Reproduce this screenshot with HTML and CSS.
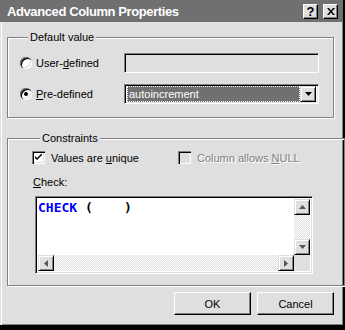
FILE: index.html
```html
<!DOCTYPE html>
<html lang="en">

<head>
    <meta charset="UTF-8">
    <title>Advanced Column Properties</title>
    <link rel="stylesheet" href="styles.css">
</head>

<body>
    <div class="window">
        <div class="titlebar">
            <span class="title">Advanced Column Properties</span>
            <div class="title-btns">
                <span class="tbtn">?</span>
                <span class="tbtn tbtn-close">
                    <svg width="8" height="7" viewBox="0 0 8 7"><path d="M0 0h2l2 2.5 2-2.5h2l-3 3.5 3 3.5h-2l-2-2.5-2 2.5h-2l3-3.5z" fill="#000"/></svg>
                </span>
            </div>
        </div>

        <div class="content">
            <fieldset class="group group-default">
                <legend>Default value</legend>
                <div class="row">
                    <label class="opt">
                        <span class="radio"></span>
                        <span>User-<u>d</u>efined</span>
                    </label>
                    <div class="field field-disabled"></div>
                </div>
                <div class="row row-second">
                    <label class="opt">
                        <span class="radio radio-on"></span>
                        <span><u>P</u>re-defined</span>
                    </label>
                    <div class="field combo">
                        <div class="combo-value">autoincrement</div>
                        <span class="btn-small">
                            <svg width="7" height="4" viewBox="0 0 7 4"><path d="M0 0h7l-3.5 4z" fill="#000"/></svg>
                        </span>
                    </div>
                </div>
            </fieldset>

            <fieldset class="group group-constraints">
                <legend>Constraints</legend>
                <div class="checks">
                    <label class="chk">
                        <span class="checkbox">
                            <svg width="7" height="7" viewBox="0 0 7 7"><path d="M0 2l2 2 5-5v2l-5 5-2-2z" fill="#000"/></svg>
                        </span>
                        <span>Values are <u>u</u>nique</span>
                    </label>
                    <label class="chk chk-disabled">
                        <span class="checkbox checkbox-off"></span>
                        <span class="muted">Column allows <u>N</u>ULL</span>
                    </label>
                </div>
                <div class="check-label"><u>C</u>heck:</div>
                <div class="editor">
                    <div class="code"><span class="kw">CHECK</span> (    )</div>
                    <div class="vscroll">
                        <span class="btn-small">
                            <svg width="7" height="4" viewBox="0 0 7 4"><path d="M3.5 0l3.5 4h-7z" fill="#555"/></svg>
                        </span>
                        <span class="track"></span>
                        <span class="btn-small">
                            <svg width="7" height="4" viewBox="0 0 7 4"><path d="M0 0h7l-3.5 4z" fill="#555"/></svg>
                        </span>
                    </div>
                    <div class="hscroll">
                        <span class="btn-small">
                            <svg width="4" height="7" viewBox="0 0 4 7"><path d="M0 3.5l4-3.5v7z" fill="#555"/></svg>
                        </span>
                        <span class="track"></span>
                        <span class="btn-small">
                            <svg width="4" height="7" viewBox="0 0 4 7"><path d="M4 3.5l-4-3.5v7z" fill="#555"/></svg>
                        </span>
                    </div>
                    <div class="corner"></div>
                </div>
            </fieldset>

            <div class="actions">
                <span class="btn">OK</span>
                <span class="btn">Cancel</span>
            </div>
        </div>
    </div>
</body>

</html>
```

FILE: styles.css
```css
* {
    margin: 0;
    padding: 0;
    box-sizing: border-box;
}

body {
    background: #000;
    font-family: 'Liberation Sans', Arial, sans-serif;
    font-size: 11px;
    color: #000;
}

.window {
    width: 344px;
    height: 326px;
    background: #dfdfdf;
    border-right: 1px solid #000;
    border-bottom: 1px solid #000;
    box-shadow: inset 1px 1px 0 #dfdfdf, inset 2px 2px 0 #fff, inset -1px -1px 0 #808080;
}

.titlebar {
    height: 22px;
    background: #707070;
    display: flex;
    align-items: center;
    justify-content: space-between;
    padding: 0 5px 0 7px;
}
.title {
    color: #fff;
    font-weight: bold;
    font-size: 13px;
    letter-spacing: -0.4px;
}
.title-btns {
    display: flex;
    gap: 5px;
}
.tbtn {
    width: 15px;
    height: 15px;
    display: flex;
    align-items: center;
    justify-content: center;
    background: #dfdfdf;
    font-weight: bold;
    font-size: 13px;
    border: 1px solid;
    border-color: #fff #000 #000 #fff;
    box-shadow: inset -1px -1px 0 #808080;
}

.content {
    padding: 0 0 0 7px;
}

.group {
    width: 327px;
    border: 1px solid #808080;
    box-shadow: 1px 1px 0 #fff, inset 1px 1px 0 #fff;
}
.group legend {
    margin-left: 8px;
    padding: 0 2px;
    line-height: 13px;
    background: #dfdfdf;
}
.group-default {
    margin-top: 9px;
    padding: 9px 12px 13px 12px;
}
.group-constraints {
    margin-top: 14px;
    padding: 6px 20px 11px 24px;
}

.row {
    display: flex;
    align-items: center;
    height: 20px;
}
.row-second {
    margin-top: 11px;
}
.opt {
    width: 104px;
    display: flex;
    align-items: center;
    gap: 4px;
}
.radio {
    width: 12px;
    height: 12px;
    border-radius: 50%;
    background: #fff;
    display: flex;
    align-items: center;
    justify-content: center;
    box-shadow: inset 1px 1px 0 #808080, inset 2px 2px 0 #000, inset -1px -1px 0 #fff, inset -2px -2px 0 #dfdfdf;
}
.radio-on::after {
    content: "";
    width: 4px;
    height: 4px;
    border-radius: 50%;
    background: #000;
}

.field {
    width: 195px;
    height: 20px;
    border: 1px solid;
    border-color: #808080 #fff #fff #808080;
    box-shadow: inset 1px 1px 0 #000, inset -1px -1px 0 #dfdfdf;
}
.field-disabled {
    background: #dfdfdf;
}
.combo {
    background: #fff;
    display: flex;
    align-items: center;
    padding: 2px;
}
.combo-value {
    flex: 1;
    height: 16px;
    background: #707070;
    color: #fff;
    line-height: 14px;
    padding-left: 1px;
    border: 1px dotted #fff;
}

.btn-small {
    width: 16px;
    height: 16px;
    display: flex;
    align-items: center;
    justify-content: center;
    background: #dfdfdf;
    border: 1px solid;
    border-color: #dfdfdf #000 #000 #dfdfdf;
    box-shadow: inset 1px 1px 0 #fff, inset -1px -1px 0 #808080;
}

.checks {
    display: flex;
    align-items: center;
    height: 13px;
}
.chk {
    display: flex;
    align-items: center;
    gap: 6px;
    width: 146px;
}
.checkbox {
    width: 13px;
    height: 13px;
    background: #fff;
    display: flex;
    align-items: center;
    justify-content: center;
    box-shadow: inset 1px 1px 0 #808080, inset 2px 2px 0 #000, inset -1px -1px 0 #fff, inset -2px -2px 0 #dfdfdf;
}
.checkbox-off {
    background: #dfdfdf;
}
.muted {
    color: #808080;
    text-shadow: 1px 1px 0 #fff;
}

.check-label {
    margin-top: 12px;
    margin-left: 1px;
    line-height: 13px;
}

.editor {
    margin-top: 7px;
    margin-left: 3px;
    width: 278px;
    height: 78px;
    background: #fff;
    border: 1px solid;
    border-color: #808080 #fff #fff #808080;
    box-shadow: inset 1px 1px 0 #000, inset -1px -1px 0 #dfdfdf;
    padding: 2px;
    display: grid;
    grid-template-columns: 1fr 16px;
    grid-template-rows: 1fr 16px;
}
.code {
    font-family: 'DejaVu Sans Mono', 'Liberation Mono', monospace;
    font-weight: bold;
    font-size: 13px;
    line-height: 14px;
    white-space: pre;
    padding-top: 2px;
}
.kw {
    color: #0000ff;
}
.vscroll {
    display: flex;
    flex-direction: column;
}
.hscroll {
    display: flex;
}
.track {
    flex: 1;
    background: repeating-conic-gradient(#fff 0 25%, #dfdfdf 0 50%) 0 0 / 2px 2px;
}
.corner {
    background: #dfdfdf;
}

.actions {
    width: 327px;
    display: flex;
    justify-content: flex-end;
    gap: 6px;
    margin-top: 6px;
}
.btn {
    width: 77px;
    height: 23px;
    display: flex;
    align-items: center;
    justify-content: center;
    background: #dfdfdf;
    border: 1px solid;
    border-color: #fff #000 #000 #fff;
    box-shadow: inset -1px -1px 0 #808080;
}
```
